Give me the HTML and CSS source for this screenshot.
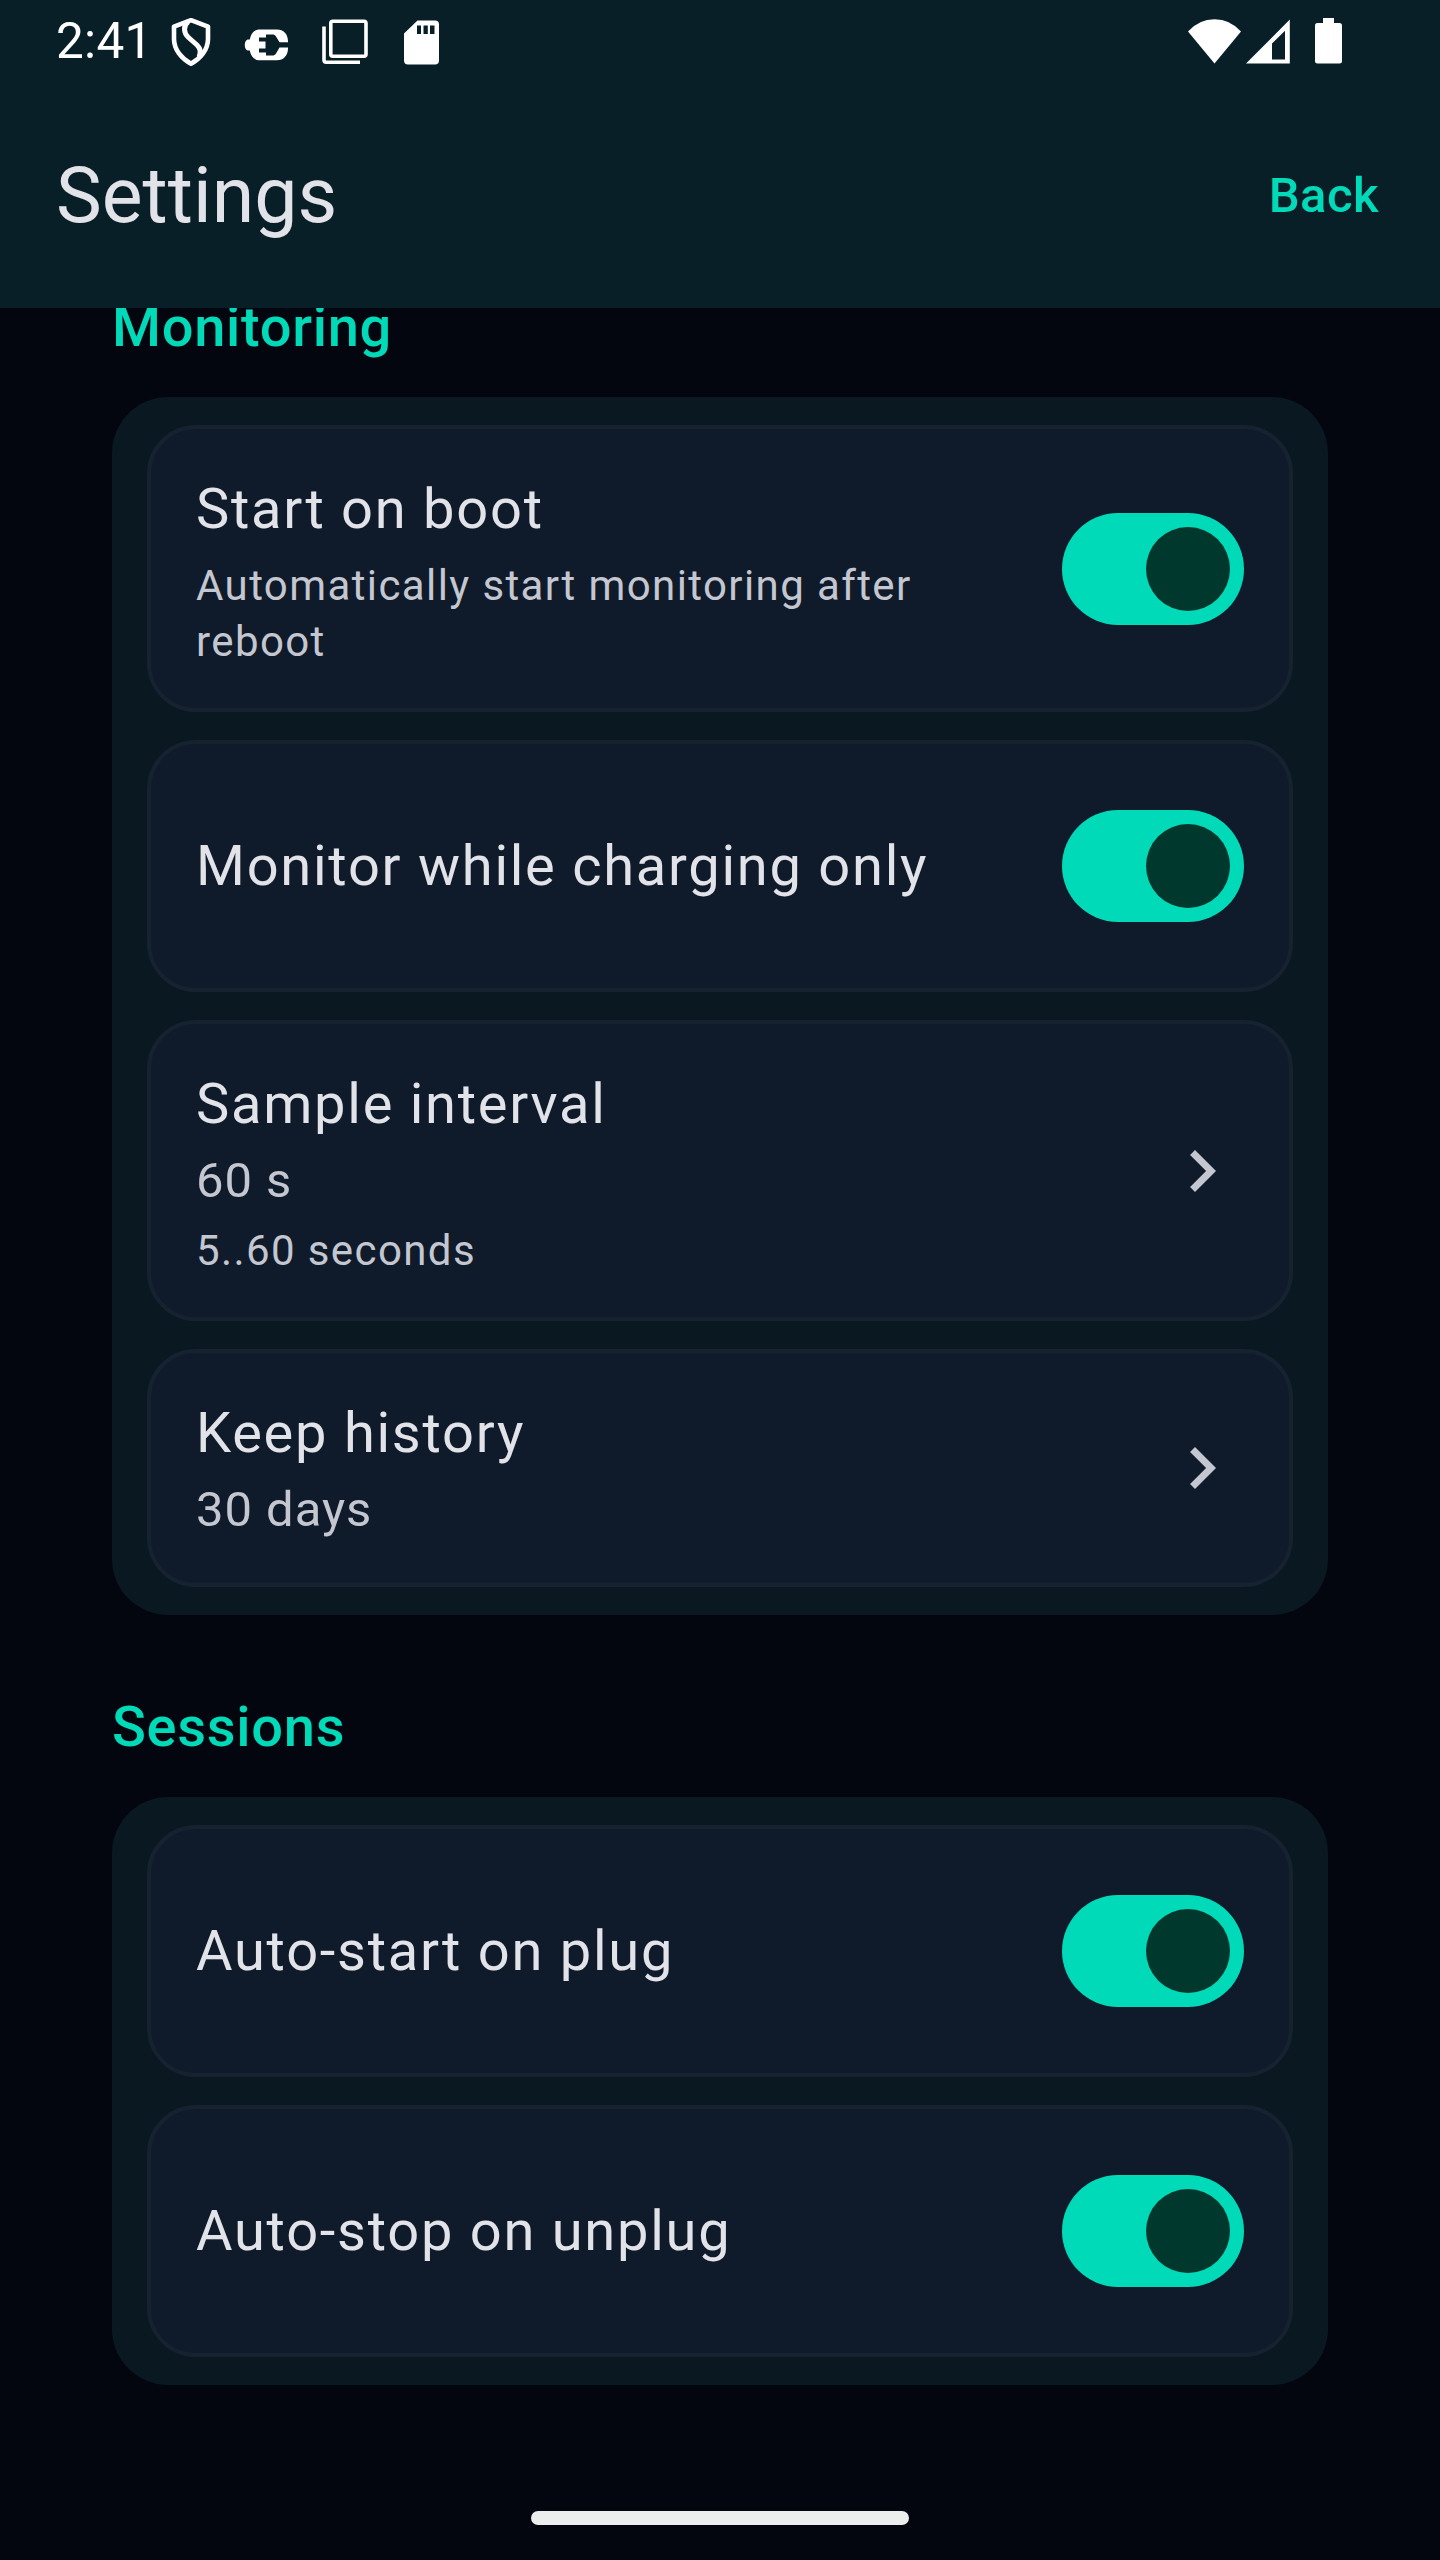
FILE: index.html
```html
<!DOCTYPE html>
<html lang="en">
<head>
<meta charset="utf-8">
<title>Settings</title>
<link rel="stylesheet" href="styles.css">
</head>
<body>
<div class="screen">
  <header class="top">
    <div class="status">
      <span class="clock">2:41</span>
      <svg class="ic-shield" width="40" height="50" viewBox="0 0 40 50" fill="none" stroke="#fff" stroke-width="4.6" stroke-linejoin="round"><path d="M20 3.2L37 9.6V22C37 33 29 42 20 46.8C11 42 3 33 3 22V9.6Z"/><path d="M17.2 4.5C12 9 12.500 16 17.500 20.500L26 28C30 32 30 36 28 40" stroke-width="5"/></svg>
      <svg class="ic-plug" width="46" height="34" viewBox="0 0 46 34"><path fill="#fff" d="M16 1.500H33C39.500 1.500 44 6 44 13.300V14.300H35.500L32 8.500C31 7 30 6.500 28.500 6.500H22V9.500H15V13.500H21.500V20.500H15V24.500H22V27.500H28.500C30 27.500 31 27 32 25.500L35.500 19.500H44V20.500C44 27.500 39.500 32.300 33 32.300H16C10.500 32.300 7 29 5.800 22.500H4.500C2 22.500 .8 20 .8 17C.8 14 2 11.500 4.500 11.500H5.800C7 5 10.500 1.500 16 1.500Z"/></svg>
      <svg class="ic-stack" width="46" height="46" viewBox="0 0 46 46" fill="none" stroke="#fff" stroke-width="3.600"><rect x="8.800" y="2.300" width="35.200" height="34.900" rx="2"/><path d="M2 7.500V41Q2 43.200 4.200 43.200H38"/></svg>
      <svg class="ic-sd" width="35" height="45" viewBox="0 0 35 45"><path fill="#fff" fill-rule="evenodd" d="M13.500 .4H31Q35 .4 35 4.400V40.500Q35 44.500 31 44.500H4Q0 44.500 0 40.500V13.500ZM13 5.500V14H17V5.500ZM19.500 5.500V14H23.800V5.500ZM26 5.500V14H30.500V5.500Z"/></svg>
      <svg class="ic-wifi" width="54" height="46" viewBox="0 0 54 46"><path fill="#fff" d="M0 13.400Q11 1.200 26.500 1.200T53 13.400L26.500 45.600Z"/></svg>
      <svg class="ic-signal" width="44" height="46" viewBox="0 0 44 46"><path fill="#fff" fill-rule="evenodd" d="M0 45.600L43.800 1.600V45.600ZM26 25.500V41.500H39V12.700Z"/></svg>
      <svg class="ic-battery" width="27" height="46" viewBox="0 0 27 46"><path fill="#fff" d="M8 0H19V5H24.500Q27 5 27 7.500V43Q27 45.500 24.500 45.500H2.500Q0 45.500 0 43V7.500Q0 5 2.500 5H8Z"/></svg>
    </div>
    <div class="appbar">
      <h1 class="title">Settings</h1>
      <a class="back">Back</a>
    </div>
  </header>
  <main class="content">
    <section class="section">
      <h2 class="heading">Monitoring</h2>
      <div class="group">
        <div class="row">
          <div class="text"><div class="label">Start on boot</div><div class="help">Automatically start monitoring after reboot</div></div>
          <div class="switch"><div class="thumb"></div></div>
        </div>
        <div class="row">
          <div class="text"><div class="label">Monitor while charging only</div></div>
          <div class="switch"><div class="thumb"></div></div>
        </div>
        <div class="row">
          <div class="text"><div class="label">Sample interval</div><div class="value">60 s</div><div class="help">5..60 seconds</div></div>
          <svg class="chevron" viewBox="0 0 24 24"><path d="M10 6L8.590 7.410 13.170 12l-4.580 4.590L10 18l6-6z"/></svg>
        </div>
        <div class="row">
          <div class="text"><div class="label">Keep history</div><div class="value">30 days</div></div>
          <svg class="chevron" viewBox="0 0 24 24"><path d="M10 6L8.590 7.410 13.170 12l-4.580 4.590L10 18l6-6z"/></svg>
        </div>
      </div>
    </section>
    <section class="section">
      <h2 class="heading">Sessions</h2>
      <div class="group">
        <div class="row">
          <div class="text"><div class="label">Auto-start on plug</div></div>
          <div class="switch"><div class="thumb"></div></div>
        </div>
        <div class="row">
          <div class="text"><div class="label">Auto-stop on unplug</div></div>
          <div class="switch"><div class="thumb"></div></div>
        </div>
      </div>
    </section>
  </main>
  <footer class="nav"><div class="pill"></div></footer>
</div>
</body>
</html>
```
FILE: styles.css
```css
* { box-sizing: border-box; }
body { margin: 0; background: #03060f; font-family: Roboto, sans-serif; color: #e2e2e9; }
.screen { width: 1440px; height: 2560px; display: flex; flex-direction: column; overflow: hidden; }
.top { height: 308px; flex: none; background: #091f27; }
.status { height: 84px; display: flex; align-items: flex-start; padding-left: 56px; }
.status svg { flex: none; }
.clock { width: 87px; margin-right: 28px; font-size: 49.5px; line-height: 58px; letter-spacing: .3px; margin-top: 12px; color: #fff; white-space: nowrap; }
.ic-shield { margin-top: 17px; }
.ic-plug { margin: 28px 0 0 33px; }
.ic-stack { margin: 19px 0 0 32px; }
.ic-sd { margin: 20px 0 0 36px; }
.ic-wifi { margin: 18px 0 0 749px; }
.ic-signal { margin: 18px 0 0 4px; }
.ic-battery { margin: 18px 0 0 25px; }
.appbar { height: 224px; display: flex; align-items: center; justify-content: space-between; padding: 0 61px 0 56px; }
.title { margin: 0; font-size: 77px; line-height: 98px; font-weight: 400; }
.back { font-size: 49px; line-height: 70px; font-weight: 500; letter-spacing: .45px; color: #00dab8; }
.content { flex: 1; min-height: 0; overflow: hidden; padding: 0 112px; }
.section { margin-bottom: 70px; }
.section:first-child { margin-top: -23px; }
.heading { margin: 0 0 28px; font-size: 56px; line-height: 84px; font-weight: 500; letter-spacing: .7px; color: #00dab8; }
.group { display: flex; flex-direction: column; gap: 28px; padding: 28px 35px; border-radius: 56px; background: #091821; }
.row { display: flex; align-items: center; gap: 42px; min-height: 238px; padding: 38px 45px; border: 4px solid #162230; border-radius: 49px; background: #0f1b2a; }
.row:has(.switch) { min-height: 252px; }
.text { flex: 1; }
.label { font-size: 56px; line-height: 84px; letter-spacing: 1.75px; }
.value { font-size: 49px; line-height: 70px; letter-spacing: .95px; color: #c4c6d0; }
.help { margin-top: 7px; font-size: 42px; line-height: 56px; letter-spacing: 1.4px; color: #c4c6d0; }
.switch { flex: none; width: 182px; height: 112px; padding: 14px; border-radius: 56px; background: #00dab8; display: flex; justify-content: flex-end; }
.thumb { width: 84px; height: 84px; border-radius: 50%; background: #00382d; }
.chevron { flex: none; width: 84px; height: 84px; fill: #c4c6d0; }
.nav { height: 49px; flex: none; display: flex; justify-content: center; }
.pill { width: 378px; height: 14px; border-radius: 7px; background: #ebeeec; }
```
